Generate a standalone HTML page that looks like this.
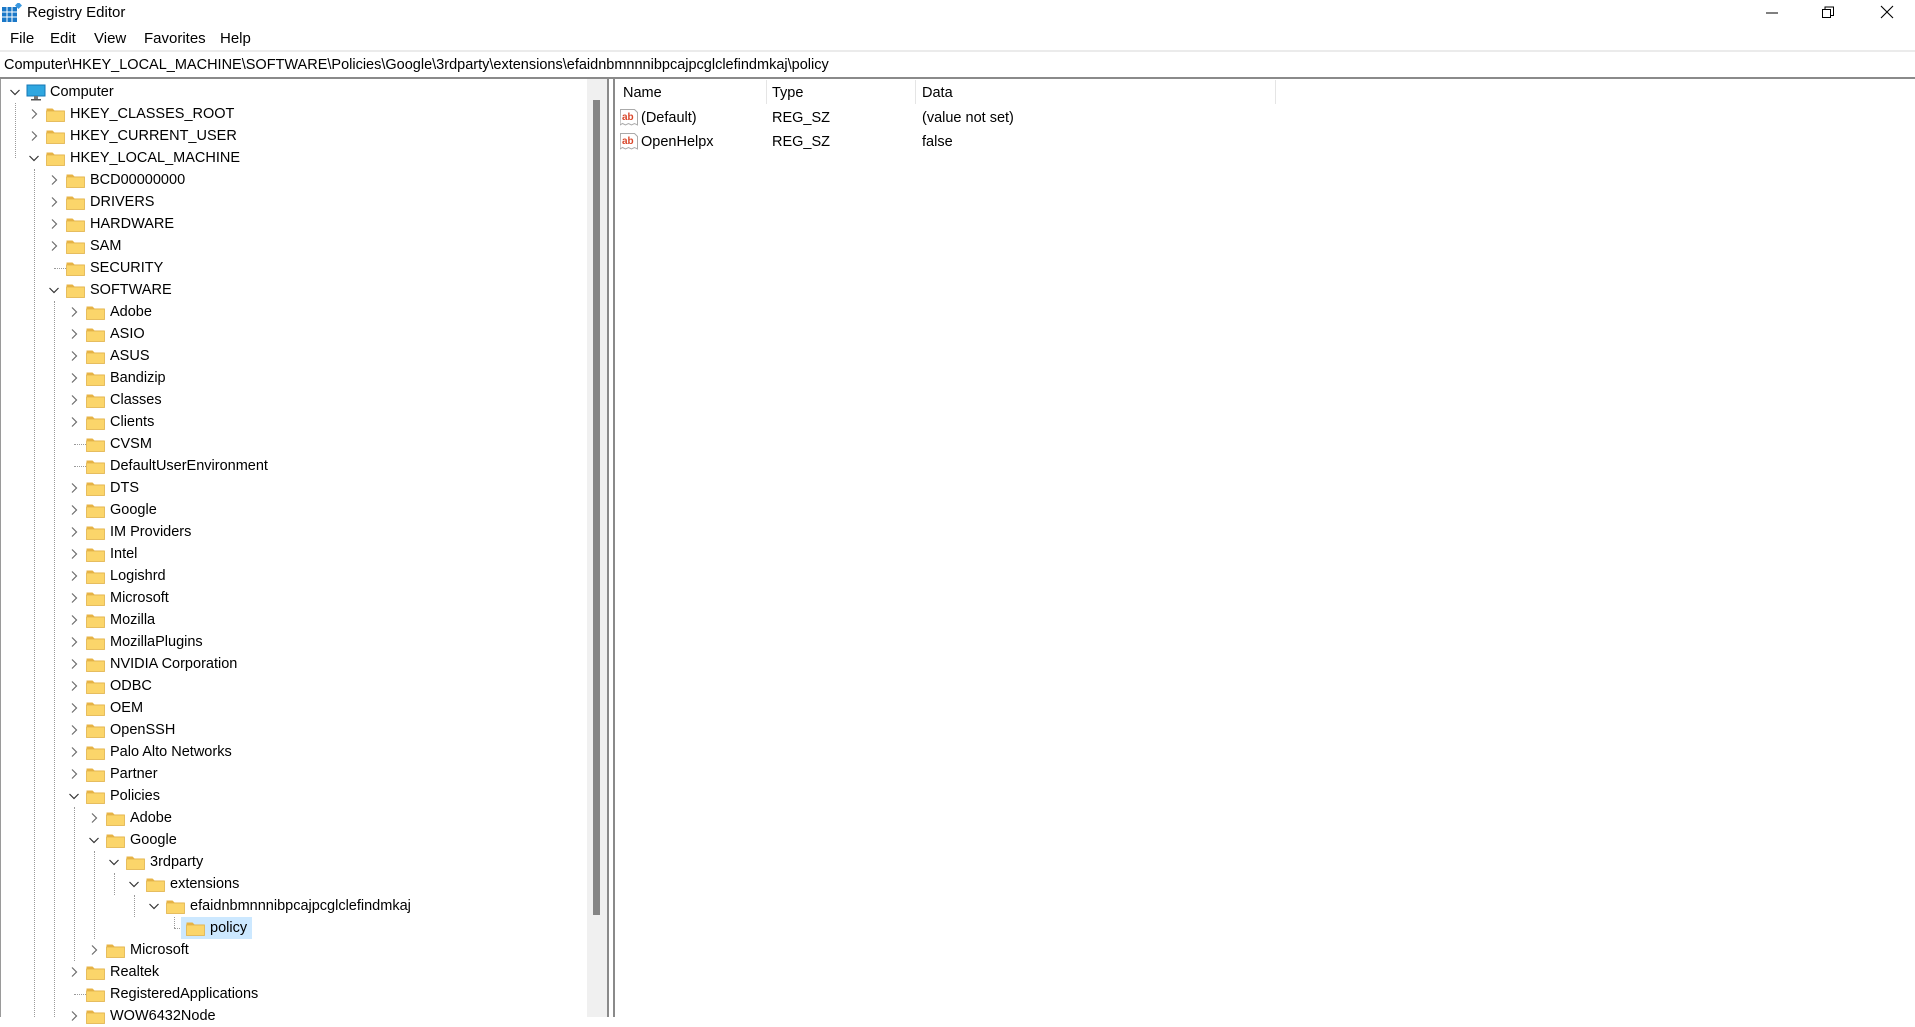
<!DOCTYPE html>
<html><head><meta charset="utf-8">
<style>
*{margin:0;padding:0;box-sizing:border-box}
body{width:1915px;height:1017px;overflow:hidden;background:#fff;font-family:"Liberation Sans",sans-serif;font-size:14.5px;color:#000;position:relative}
.abs{position:absolute}
.r{position:absolute;height:22px;width:560px}
.c{position:absolute;left:0;top:5px;width:12px;height:12px}
.f{position:absolute;left:18px;top:4px;width:19px;height:15px}
.t{position:absolute;left:42px;top:0;line-height:22px;white-space:nowrap}
.vl{position:absolute;border-left:1px dotted #9a9a9a;width:0}
.hl{position:absolute;border-top:1px dotted #9a9a9a;height:0}
</style></head><body>
<svg width="0" height="0" style="position:absolute">
<defs>
<symbol id="fo" viewBox="0 0 19 15"><path d="M0.5 1.5h6l2 2h10v2h-18z" fill="#e7b344"/><rect x="0.5" y="4" width="18" height="10.5" fill="#fbd56a" stroke="#e2b24a" stroke-width="0.8"/></symbol>
<symbol id="cr" viewBox="0 0 12 12"><path d="M4 1.5 L8.5 6 L4 10.5" fill="none" stroke="#6b6b6b" stroke-width="1.2"/></symbol>
<symbol id="cd" viewBox="0 0 12 12"><path d="M1.5 4 L6 8.5 L10.5 4" fill="none" stroke="#333" stroke-width="1.2"/></symbol>
</defs></svg>

<!-- title bar -->
<svg class="abs" style="left:2px;top:3px" width="20" height="19" viewBox="0 0 20 19">
<rect x="0" y="4" width="15" height="15" fill="#1a78c8"/>
<path d="M5 4v15M10 4v15M0 9h15M0 14h15" stroke="#fff" stroke-width="1"/>
<rect x="14" y="0" width="5" height="5" fill="#3a98e0" transform="rotate(45 16.5 2.5)"/>
</svg>
<div class="abs" style="left:27px;top:3px;font-size:15px;line-height:20px">Registry Editor</div>
<svg class="abs" style="left:1764px;top:6px" width="16" height="14"><path d="M2 7h12" stroke="#000" stroke-width="1"/></svg>
<svg class="abs" style="left:1821px;top:5px" width="14" height="14"><rect x="1.5" y="4.5" width="8" height="8" fill="none" stroke="#000"/><path d="M4 4.5V2h8.5v8.5H10" fill="none" stroke="#000"/></svg>
<svg class="abs" style="left:1880px;top:5px" width="14" height="14"><path d="M1 1L13 13M13 1L1 13" stroke="#000" stroke-width="1.1"/></svg>

<!-- menu -->
<div class="abs" style="top:29px;left:10px;line-height:20px;font-size:15px">File</div>
<div class="abs" style="top:29px;left:50px;line-height:20px;font-size:15px">Edit</div>
<div class="abs" style="top:29px;left:94px;line-height:20px;font-size:15px">View</div>
<div class="abs" style="top:29px;left:144px;line-height:20px;font-size:15px">Favorites</div>
<div class="abs" style="top:29px;left:220px;line-height:20px;font-size:15px">Help</div>

<!-- address -->
<div class="abs" style="top:50px;left:0;width:1915px;height:2px;background:#ebebeb"></div>
<div class="abs" style="top:55px;left:4px;line-height:20px;font-size:14.5px;white-space:nowrap">Computer\HKEY_LOCAL_MACHINE\SOFTWARE\Policies\Google\3rdparty\extensions\efaidnbmnnnibpcajpcglclefindmkaj\policy</div>
<div class="abs" style="top:77px;left:0;width:1915px;height:2px;background:#8a8a8a"></div>

<!-- panes -->
<div class="abs" style="top:79px;left:0;width:1px;height:938px;background:#9a9a9a"></div>
<div class="abs" style="top:79px;left:587px;width:20px;height:938px;background:#f0f0f0"></div>
<div class="abs" style="top:100px;left:593px;width:7px;height:815px;background:#858585"></div>
<div class="abs" style="top:79px;left:607px;width:2px;height:938px;background:#8a8a8a"></div>
<div class="abs" style="top:79px;left:613px;width:2px;height:938px;background:#8a8a8a"></div>

<!-- right pane -->
<div class="abs" style="top:83px;left:623px;line-height:20px">Name</div>
<div class="abs" style="top:83px;left:772px;line-height:20px">Type</div>
<div class="abs" style="top:83px;left:922px;line-height:20px">Data</div>
<div class="abs" style="top:80px;left:766px;width:1px;height:24px;background:#e5e5e5"></div>
<div class="abs" style="top:80px;left:915px;width:1px;height:24px;background:#e5e5e5"></div>
<div class="abs" style="top:80px;left:1275px;width:1px;height:24px;background:#e5e5e5"></div>

<svg class="abs" style="left:620px;top:108px" width="19" height="18"><path d="M0.5 1.5h14l3 3v12.5l-3-1.5-3 1.5-3-1.5-3 1.5-3-1.5-2.5 1.5z" fill="#fff" stroke="#aaa"/><text x="2" y="12" font-family="Liberation Sans" font-weight="bold" font-size="10" fill="#d9472b">ab</text></svg>
<div class="abs" style="top:108px;left:641px;line-height:20px">(Default)</div>
<div class="abs" style="top:108px;left:772px;line-height:20px">REG_SZ</div>
<div class="abs" style="top:108px;left:922px;line-height:20px">(value not set)</div>
<svg class="abs" style="left:620px;top:132px" width="19" height="18"><path d="M0.5 1.5h14l3 3v12.5l-3-1.5-3 1.5-3-1.5-3 1.5-3-1.5-2.5 1.5z" fill="#fff" stroke="#aaa"/><text x="2" y="12" font-family="Liberation Sans" font-weight="bold" font-size="10" fill="#d9472b">ab</text></svg>
<div class="abs" style="top:132px;left:641px;line-height:20px">OpenHelpx</div>
<div class="abs" style="top:132px;left:772px;line-height:20px">REG_SZ</div>
<div class="abs" style="top:132px;left:922px;line-height:20px">false</div>

<!-- tree dotted lines -->
<div class="vl" style="left:15px;top:103px;height:55px"></div>
<div class="vl" style="left:34px;top:169px;height:848px"></div>
<div class="vl" style="left:54px;top:301px;height:716px"></div>
<div class="vl" style="left:74px;top:807px;height:154px"></div>
<div class="vl" style="left:94px;top:851px;height:88px"></div>
<div class="vl" style="left:114px;top:873px;height:22px"></div>
<div class="vl" style="left:134px;top:895px;height:22px"></div>
<div class="vl" style="left:174px;top:917px;height:11px"></div>
<div class="hl" style="left:174px;top:928px;width:10px"></div>
<div class="hl" style="left:54px;top:268px;width:12px"></div>
<div class="hl" style="left:74px;top:444px;width:12px"></div>
<div class="hl" style="left:74px;top:466px;width:12px"></div>
<div class="hl" style="left:74px;top:994px;width:12px"></div>

<!-- selection -->
<div class="abs" style="left:181px;top:917px;width:71px;height:22px;background:#cce8ff"></div>

<!-- tree rows -->
<div class="r" style="left:9px;top:81px"><svg class="c"><use href="#cd"/></svg>
<svg class="abs" style="left:17px;top:3px" width="20" height="17"><rect x="1" y="1" width="18" height="11" fill="#2fa7e0" stroke="#1577b5"/><rect x="8" y="12" width="4" height="3" fill="#777"/><rect x="5" y="15" width="10" height="1.5" fill="#555"/></svg>
<span class="t" style="left:41px">Computer</span></div>

<div class="r" style="left:28px;top:103px"><svg class="c"><use href="#cr"/></svg><svg class="f"><use href="#fo"/></svg><span class="t">HKEY_CLASSES_ROOT</span></div>
<div class="r" style="left:28px;top:125px"><svg class="c"><use href="#cr"/></svg><svg class="f"><use href="#fo"/></svg><span class="t">HKEY_CURRENT_USER</span></div>
<div class="r" style="left:28px;top:147px"><svg class="c"><use href="#cd"/></svg><svg class="f"><use href="#fo"/></svg><span class="t">HKEY_LOCAL_MACHINE</span></div>

<div class="r" style="left:48px;top:169px"><svg class="c"><use href="#cr"/></svg><svg class="f"><use href="#fo"/></svg><span class="t">BCD00000000</span></div>
<div class="r" style="left:48px;top:191px"><svg class="c"><use href="#cr"/></svg><svg class="f"><use href="#fo"/></svg><span class="t">DRIVERS</span></div>
<div class="r" style="left:48px;top:213px"><svg class="c"><use href="#cr"/></svg><svg class="f"><use href="#fo"/></svg><span class="t">HARDWARE</span></div>
<div class="r" style="left:48px;top:235px"><svg class="c"><use href="#cr"/></svg><svg class="f"><use href="#fo"/></svg><span class="t">SAM</span></div>
<div class="r" style="left:48px;top:257px"><svg class="f"><use href="#fo"/></svg><span class="t">SECURITY</span></div>
<div class="r" style="left:48px;top:279px"><svg class="c"><use href="#cd"/></svg><svg class="f"><use href="#fo"/></svg><span class="t">SOFTWARE</span></div>

<div class="r" style="left:68px;top:301px"><svg class="c"><use href="#cr"/></svg><svg class="f"><use href="#fo"/></svg><span class="t">Adobe</span></div>
<div class="r" style="left:68px;top:323px"><svg class="c"><use href="#cr"/></svg><svg class="f"><use href="#fo"/></svg><span class="t">ASIO</span></div>
<div class="r" style="left:68px;top:345px"><svg class="c"><use href="#cr"/></svg><svg class="f"><use href="#fo"/></svg><span class="t">ASUS</span></div>
<div class="r" style="left:68px;top:367px"><svg class="c"><use href="#cr"/></svg><svg class="f"><use href="#fo"/></svg><span class="t">Bandizip</span></div>
<div class="r" style="left:68px;top:389px"><svg class="c"><use href="#cr"/></svg><svg class="f"><use href="#fo"/></svg><span class="t">Classes</span></div>
<div class="r" style="left:68px;top:411px"><svg class="c"><use href="#cr"/></svg><svg class="f"><use href="#fo"/></svg><span class="t">Clients</span></div>
<div class="r" style="left:68px;top:433px"><svg class="f"><use href="#fo"/></svg><span class="t">CVSM</span></div>
<div class="r" style="left:68px;top:455px"><svg class="f"><use href="#fo"/></svg><span class="t">DefaultUserEnvironment</span></div>
<div class="r" style="left:68px;top:477px"><svg class="c"><use href="#cr"/></svg><svg class="f"><use href="#fo"/></svg><span class="t">DTS</span></div>
<div class="r" style="left:68px;top:499px"><svg class="c"><use href="#cr"/></svg><svg class="f"><use href="#fo"/></svg><span class="t">Google</span></div>
<div class="r" style="left:68px;top:521px"><svg class="c"><use href="#cr"/></svg><svg class="f"><use href="#fo"/></svg><span class="t">IM Providers</span></div>
<div class="r" style="left:68px;top:543px"><svg class="c"><use href="#cr"/></svg><svg class="f"><use href="#fo"/></svg><span class="t">Intel</span></div>
<div class="r" style="left:68px;top:565px"><svg class="c"><use href="#cr"/></svg><svg class="f"><use href="#fo"/></svg><span class="t">Logishrd</span></div>
<div class="r" style="left:68px;top:587px"><svg class="c"><use href="#cr"/></svg><svg class="f"><use href="#fo"/></svg><span class="t">Microsoft</span></div>
<div class="r" style="left:68px;top:609px"><svg class="c"><use href="#cr"/></svg><svg class="f"><use href="#fo"/></svg><span class="t">Mozilla</span></div>
<div class="r" style="left:68px;top:631px"><svg class="c"><use href="#cr"/></svg><svg class="f"><use href="#fo"/></svg><span class="t">MozillaPlugins</span></div>
<div class="r" style="left:68px;top:653px"><svg class="c"><use href="#cr"/></svg><svg class="f"><use href="#fo"/></svg><span class="t">NVIDIA Corporation</span></div>
<div class="r" style="left:68px;top:675px"><svg class="c"><use href="#cr"/></svg><svg class="f"><use href="#fo"/></svg><span class="t">ODBC</span></div>
<div class="r" style="left:68px;top:697px"><svg class="c"><use href="#cr"/></svg><svg class="f"><use href="#fo"/></svg><span class="t">OEM</span></div>
<div class="r" style="left:68px;top:719px"><svg class="c"><use href="#cr"/></svg><svg class="f"><use href="#fo"/></svg><span class="t">OpenSSH</span></div>
<div class="r" style="left:68px;top:741px"><svg class="c"><use href="#cr"/></svg><svg class="f"><use href="#fo"/></svg><span class="t">Palo Alto Networks</span></div>
<div class="r" style="left:68px;top:763px"><svg class="c"><use href="#cr"/></svg><svg class="f"><use href="#fo"/></svg><span class="t">Partner</span></div>
<div class="r" style="left:68px;top:785px"><svg class="c"><use href="#cd"/></svg><svg class="f"><use href="#fo"/></svg><span class="t">Policies</span></div>

<div class="r" style="left:88px;top:807px"><svg class="c"><use href="#cr"/></svg><svg class="f"><use href="#fo"/></svg><span class="t">Adobe</span></div>
<div class="r" style="left:88px;top:829px"><svg class="c"><use href="#cd"/></svg><svg class="f"><use href="#fo"/></svg><span class="t">Google</span></div>
<div class="r" style="left:108px;top:851px"><svg class="c"><use href="#cd"/></svg><svg class="f"><use href="#fo"/></svg><span class="t">3rdparty</span></div>
<div class="r" style="left:128px;top:873px"><svg class="c"><use href="#cd"/></svg><svg class="f"><use href="#fo"/></svg><span class="t">extensions</span></div>
<div class="r" style="left:148px;top:895px"><svg class="c"><use href="#cd"/></svg><svg class="f"><use href="#fo"/></svg><span class="t">efaidnbmnnnibpcajpcglclefindmkaj</span></div>
<div class="r" style="left:168px;top:917px"><svg class="f"><use href="#fo"/></svg><span class="t">policy</span></div>
<div class="r" style="left:88px;top:939px"><svg class="c"><use href="#cr"/></svg><svg class="f"><use href="#fo"/></svg><span class="t">Microsoft</span></div>

<div class="r" style="left:68px;top:961px"><svg class="c"><use href="#cr"/></svg><svg class="f"><use href="#fo"/></svg><span class="t">Realtek</span></div>
<div class="r" style="left:68px;top:983px"><svg class="f"><use href="#fo"/></svg><span class="t">RegisteredApplications</span></div>
<div class="r" style="left:68px;top:1005px"><svg class="c"><use href="#cr"/></svg><svg class="f"><use href="#fo"/></svg><span class="t">WOW6432Node</span></div>
</body></html>
